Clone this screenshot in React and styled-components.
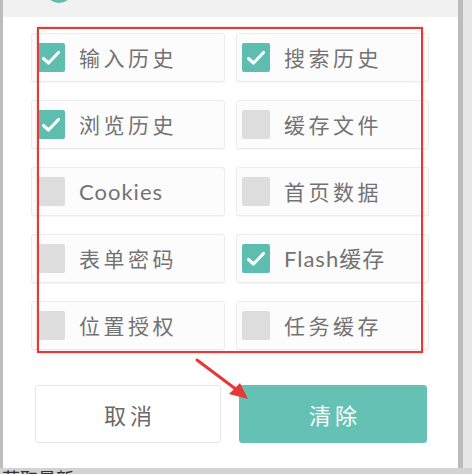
import React from "react";
import styled, { createGlobalStyle } from "styled-components";

const Global = createGlobalStyle`
  html, body { margin: 0; padding: 0; width: 472px; height: 474px; overflow: hidden; background: #c9c9c9; }
  * { box-sizing: border-box; }
`;

const Page = styled.div`
  position: relative;
  width: 472px;
  height: 474px;
  display: flex;
  flex-direction: column;
  background: #cfcfcf;
  overflow: hidden;
`;

const Row = styled.div`
  display: flex;
  height: 468px;
`;

const LeftEdge = styled.div`
  width: 3px;
  background: #bdbdbd;
`;

const RightEdge = styled.div`
  flex: 1;
  display: flex;
  background: #e6e6e6;
  &::before {
    content: "";
    width: 5px;
    background: #bcbcbc;
  }
`;

const Dialog = styled.div`
  position: relative;
  width: 455px;
  background: #ffffff;
  display: flex;
  flex-direction: column;
`;

const Header = styled.div`
  position: relative;
  height: 17px;
  background: #f1f1f1;
  overflow: hidden;
`;

const Avatar = styled.div`
  position: absolute;
  left: 42px;
  top: -25px;
  width: 28px;
  height: 28px;
  border-radius: 50%;
  background: #5dbdae;
`;

const Grid = styled.div`
  display: grid;
  grid-template-columns: 194px 193px;
  column-gap: 11px;
  row-gap: 18px;
  padding: 16px 0 0 28px;
`;

const Card = styled.div`
  height: 49px;
  border: 1px solid #ececec;
  border-radius: 3px;
  background: #fcfcfc;
  box-shadow: 0 1px 1px rgba(0, 0, 0, 0.04);
  display: flex;
  align-items: center;
  padding-left: 5px;
  gap: 14px;
`;

const Box = styled.div`
  width: 28px;
  height: 29px;
  border-radius: 2px;
  background: ${(p) => (p.$on ? "#5dbdae" : "#dddddd")};
  display: flex;
  align-items: center;
  justify-content: center;
`;

const Label = styled.span`
  font-family: ${(p) => (p.$latin ? "Lato" : "\"Noto Sans CJK SC\"")}, "Noto Sans CJK SC", sans-serif;
  font-size: ${(p) => (p.$latin ? "22px" : "21px")};
  color: #737373;
  letter-spacing: ${(p) => (p.$latin ? "1px" : "3.5px")};
  line-height: 1;
`;

const Buttons = styled.div`
  display: flex;
  gap: 18px;
  padding: 35px 0 0 32px;
`;

const Button = styled.div`
  width: ${(p) => (p.$primary ? "188px" : "186px")};
  height: 58px;
  border-radius: 3px;
  border: 1px solid ${(p) => (p.$primary ? "#66c1b5" : "#e6e6e6")};
  background: ${(p) => (p.$primary ? "#66c1b5" : "#ffffff")};
  color: ${(p) => (p.$primary ? "#ffffff" : "#6a6a6a")};
  font-family: "Noto Sans CJK SC", sans-serif;
  font-size: 22px;
  letter-spacing: 4px;
  display: flex;
  align-items: center;
  justify-content: center;
  padding-left: 4px;
`;

const Bottom = styled.div`
  flex: 1;
  background: #d3d3d3;
  padding-left: 2px;
  font-family: "Noto Sans CJK SC", sans-serif;
  font-size: 18px;
  line-height: 1;
  color: #333;
  overflow: hidden;
  & span { display: block; margin-top: 1px; }
`;

const Annotation = styled.div`
  position: absolute;
  left: 37px;
  top: 27px;
  width: 386px;
  height: 326px;
  border: 2px solid #e53935;
  box-shadow: 0 0 2px rgba(229, 57, 53, 0.4);
  pointer-events: none;
`;

const Arrow = styled.svg`
  position: absolute;
  left: 190px;
  top: 355px;
  pointer-events: none;
`;

const Check = () => (
  <svg width="20" height="16" viewBox="0 0 20 16">
    <path d="M2.5 8.5 L7.5 13 L17.5 2.5" fill="none" stroke="#fff" strokeWidth="3.2" strokeLinecap="round" strokeLinejoin="round" />
  </svg>
);

const items = [
  { t: "输入历史", on: true },
  { t: "搜索历史", on: true },
  { t: "浏览历史", on: true },
  { t: "缓存文件", on: false },
  { t: "Cookies", on: false, latin: true },
  { t: "首页数据", on: false },
  { t: "表单密码", on: false },
  { t: "Flash缓存", on: true, latin: true },
  { t: "位置授权", on: false },
  { t: "任务缓存", on: false },
];

export default function App() {
  return (
    <>
      <Global />
      <Page>
        <Row>
          <LeftEdge />
          <Dialog>
            <Header>
              <Avatar />
            </Header>
            <Grid>
              {items.map((it) => (
                <Card key={it.t}>
                  <Box $on={it.on}>{it.on && <Check />}</Box>
                  <Label $latin={it.latin}>{it.t}</Label>
                </Card>
              ))}
            </Grid>
            <Buttons>
              <Button>取消</Button>
              <Button $primary>清除</Button>
            </Buttons>
          </Dialog>
          <RightEdge />
        </Row>
        <Bottom>
          <span>获取最新</span>
        </Bottom>
        <Annotation />
        <Arrow width="70" height="50" viewBox="0 0 70 50">
          <line x1="7" y1="5" x2="47" y2="35" stroke="#e53935" strokeWidth="3" strokeLinecap="round" />
          <polygon points="58,44 39,39 50,28" fill="#e53935" />
        </Arrow>
      </Page>
    </>
  );
}
